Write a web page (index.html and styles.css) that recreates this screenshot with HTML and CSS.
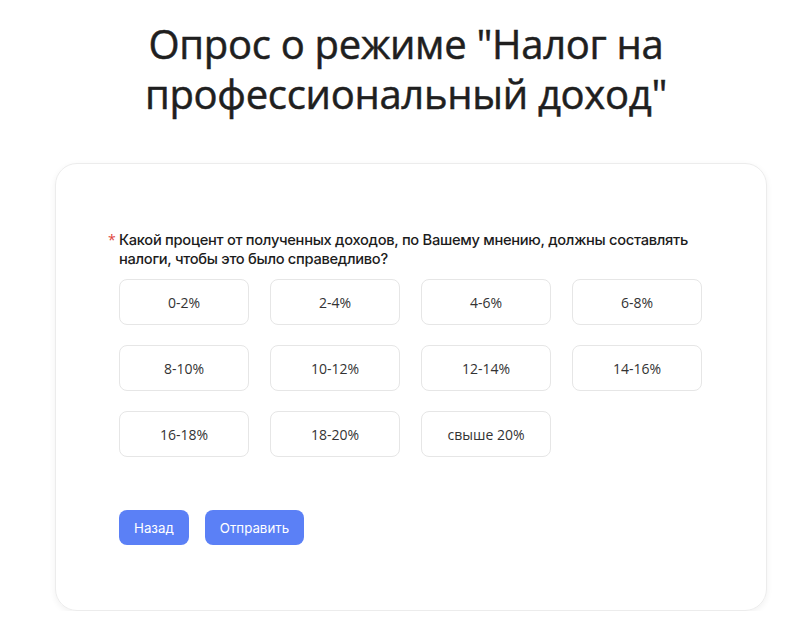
FILE: index.html
```html
<!DOCTYPE html>
<html lang="ru">
<head>
<meta charset="utf-8">
<link rel="stylesheet" href="styles.css">
</head>
<body>
<div class="page">
  <h1 class="title">Опрос о режиме "Налог на профессиональный доход"</h1>
  <div class="card">
    <div class="question">
      <span class="req">*</span>
      <p class="qtext">Какой процент от полученных доходов, по Вашему мнению, должны составлять налоги, чтобы это было справедливо?</p>
    </div>
    <div class="options">
      <div class="opt">0-2%</div>
      <div class="opt">2-4%</div>
      <div class="opt">4-6%</div>
      <div class="opt">6-8%</div>
      <div class="opt">8-10%</div>
      <div class="opt">10-12%</div>
      <div class="opt">12-14%</div>
      <div class="opt">14-16%</div>
      <div class="opt">16-18%</div>
      <div class="opt">18-20%</div>
      <div class="opt">свыше 20%</div>
    </div>
    <div class="actions">
      <button class="btn">Назад</button>
      <button class="btn">Отправить</button>
    </div>
  </div>
</div>
</body>
</html>
```
FILE: styles.css
```css
html, body {
  margin: 0;
  padding: 0;
  background: #ffffff;
}
body {
  font-family: "Open Sans", "Liberation Sans", sans-serif;
  color: #222;
}
.page {
  width: 800px;
  padding-top: 19px;
}
.title {
  margin: 0 0 0 116px;
  width: 580px;
  text-align: center;
  font-family: "Open Sans", sans-serif;
  font-weight: 500;
  font-size: 40px;
  line-height: 50px;
  color: #1f1f1f;
  letter-spacing: -0.3px;
  -webkit-text-stroke: 0.5px #1f1f1f;
}
.card {
  margin: 44px 0 0 55px;
  width: 712px;
  height: 448px;
  box-sizing: border-box;
  border: 1px solid #ececec;
  border-radius: 22px;
  box-shadow: 0 2px 6px rgba(0,0,0,0.06);
  padding: 67px 0 0 52px;
}
.question {
  display: flex;
  gap: 5px;
}
.req {
  color: #e0443c;
  font-size: 14px;
  line-height: 18px;
  width: 6px;
}
.qtext {
  margin: 0;
  font-family: "Inter", sans-serif;
  font-weight: 500;
  font-size: 14.7px;
  line-height: 19px;
  color: #1c1c1c;
  width: 590px;
  letter-spacing: -0.3px;
}
.options {
  margin: 10px 0 0 11px;
  display: grid;
  grid-template-columns: repeat(4, 130px);
  column-gap: 21px;
  row-gap: 20px;
}
.opt {
  height: 46px;
  box-sizing: border-box;
  border: 1px solid #e6e6e6;
  border-radius: 8px;
  display: flex;
  align-items: center;
  justify-content: center;
  font-size: 14px;
  color: #333;
}
.actions {
  margin: 53px 0 0 11px;
  display: flex;
  gap: 16px;
}
.btn {
  height: 35px;
  padding: 0 15px;
  border: none;
  border-radius: 8px;
  background: #5b80f6;
  color: #fff;
  font-family: "Inter", sans-serif;
  font-size: 13.3px;
  font-weight: 400;
}
```
